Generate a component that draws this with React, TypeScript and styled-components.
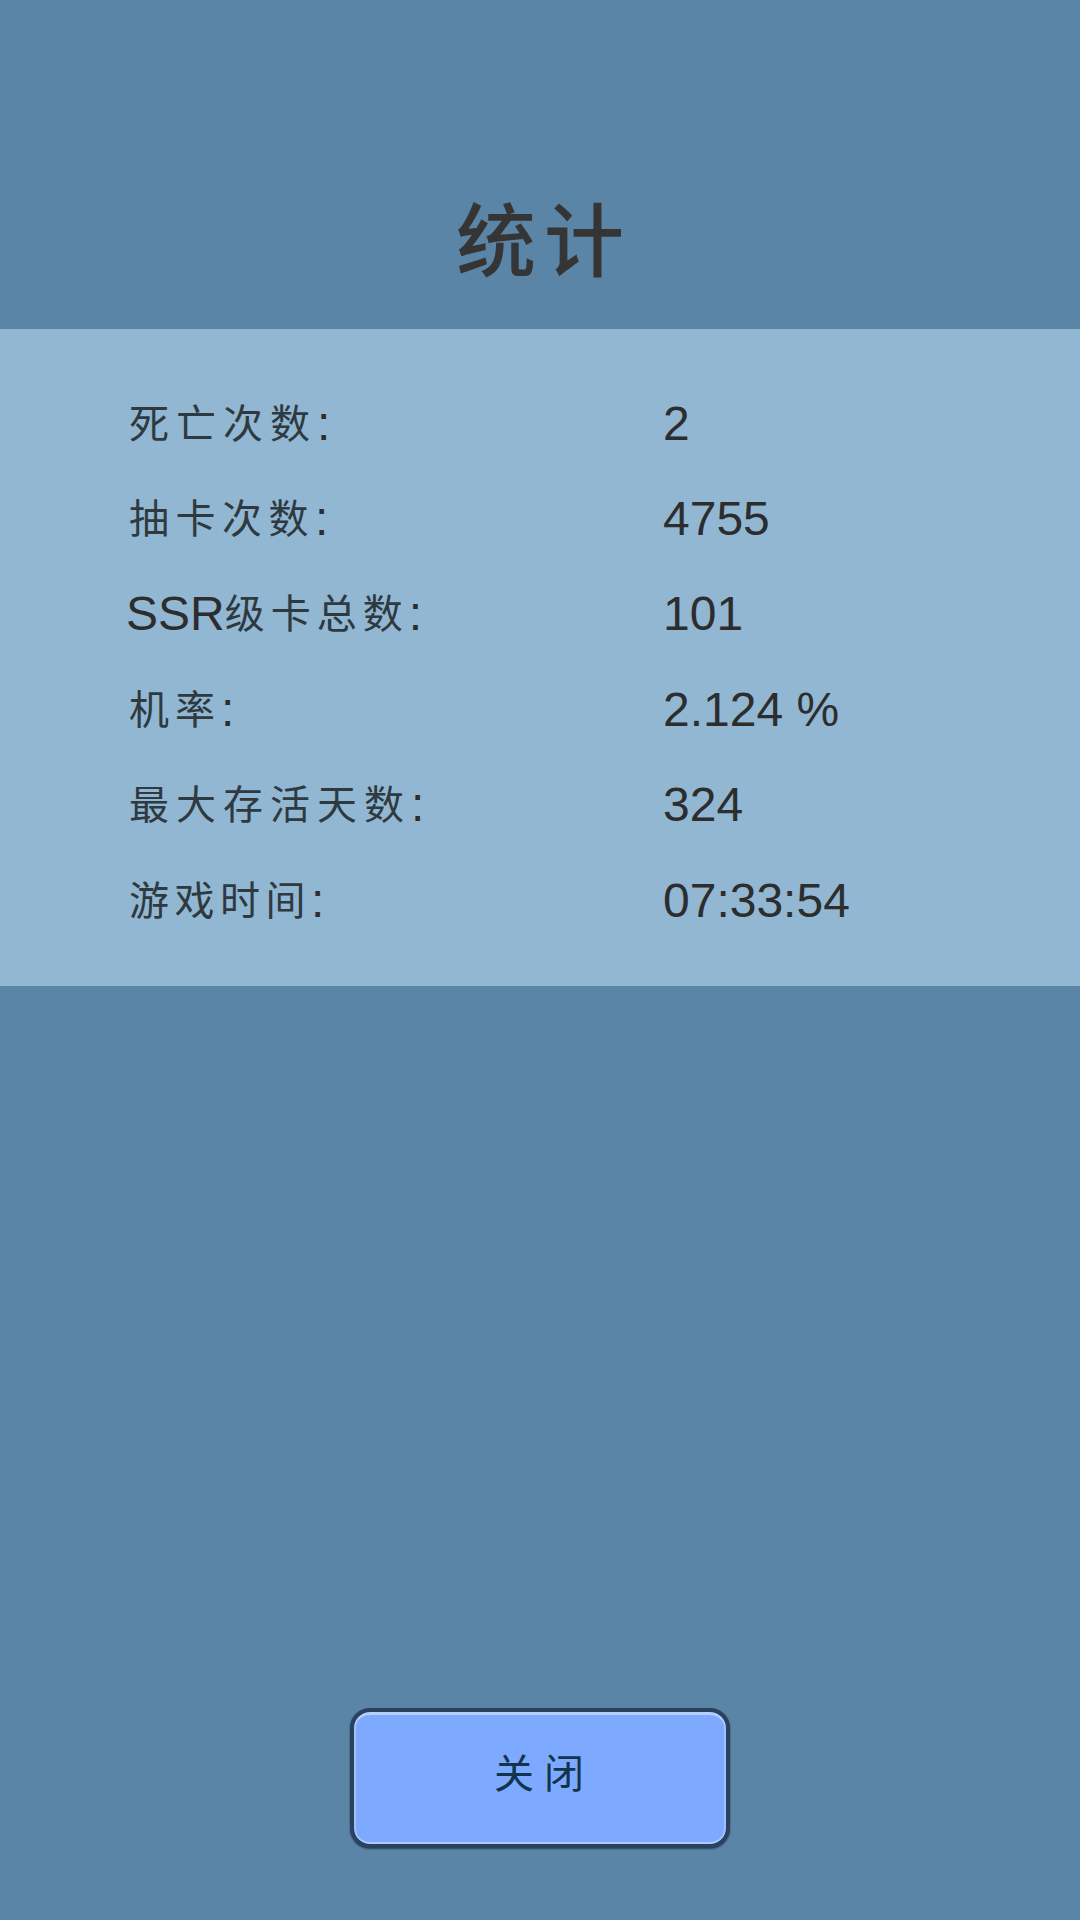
import React from "react";
import styled, { createGlobalStyle } from "styled-components";

const Global = createGlobalStyle`
  html, body { margin: 0; padding: 0; }
  body { background: #5b85a6; }
`;
const Screen = styled.div`
  width: 1080px; height: 1920px; background: #5b85a6; display: flex; flex-direction: column;
  font-family: "Liberation Sans", "Noto Sans CJK SC", sans-serif; color: #2d2d2d; overflow: hidden;
`;
const Header = styled.div`
  height: 329px; display: flex; align-items: flex-end; justify-content: center; padding-bottom: 44px; box-sizing: border-box;
`;
const Title = styled.h1`
  margin: 0; padding-left: 8px; font-size: 80px; font-weight: 500; letter-spacing: 8px; line-height: 100px; color: #353535;
  font-family: "Noto Sans CJK SC", sans-serif;
`;
const Panel = styled.div`
  height: 657px; background: #91b7d3; box-sizing: border-box; padding: 47px 0 0 126px; display: flex; flex-direction: column;
`;
const Row = styled.div`
  height: 95.4px; display: flex; align-items: center; font-size: 48px; line-height: 56px;
`;
const Label = styled.div`
  width: 537px; display: flex; align-items: center;
`;
const Han = styled.span<{ $spacing: number; $lead: number }>`
  font-family: "Noto Sans CJK SC", sans-serif; font-size: 40px; color: #2f3a40;
  letter-spacing: ${(p) => p.$spacing}px; margin-left: ${(p) => p.$lead}px; padding-bottom: 6px; line-height: 50px;
`;
const Value = styled.div``;
const Spacer = styled.div`flex: 1; display: flex; justify-content: center; align-items: flex-end; padding-bottom: 72px;`;
const CloseButton = styled.button`
  width: 380px; height: 140px; box-sizing: border-box; border-radius: 20px; padding: 0 0 14px 8px;
  background: #7daaff; border: 4px solid #28425f;
  box-shadow: inset 0 3px 0 #b4cffb, inset 0 -2px 0 #b0cbfb, inset 2px 0 0 #a0c0fb, inset -2px 0 0 #a0c0fb, 0 1px 2px #28425f;
  color: #12344f; font-size: 40px; letter-spacing: 10px; font-family: "Noto Sans CJK SC", sans-serif;
`;
type Stat = { latin?: string; han: string; spacing: number; value: string };
const rows: Stat[] = [
  { han: "死亡次数", spacing: 7, value: "2" },
  { han: "抽卡次数", spacing: 6.5, value: "4755" },
  { latin: "SSR", han: "级卡总数", spacing: 6, value: "101" },
  { han: "机率", spacing: 6, value: "2.124 %" },
  { han: "最大存活天数", spacing: 7, value: "324" },
  { han: "游戏时间", spacing: 5.5, value: "07:33:54" },
];
export default function App() {
  return (
    <Screen>
      <Global />
      <Header><Title>统计</Title></Header>
      <Panel>
        {rows.map((r) => (
          <Row key={r.han}>
            <Label>
              {r.latin && <span>{r.latin}</span>}
              <Han $spacing={r.spacing} $lead={r.latin ? 0 : 3}>{r.han}</Han>
              <span>:</span>
            </Label>
            <Value>{r.value}</Value>
          </Row>
        ))}
      </Panel>
      <Spacer><CloseButton>关闭</CloseButton></Spacer>
    </Screen>
  );
}
